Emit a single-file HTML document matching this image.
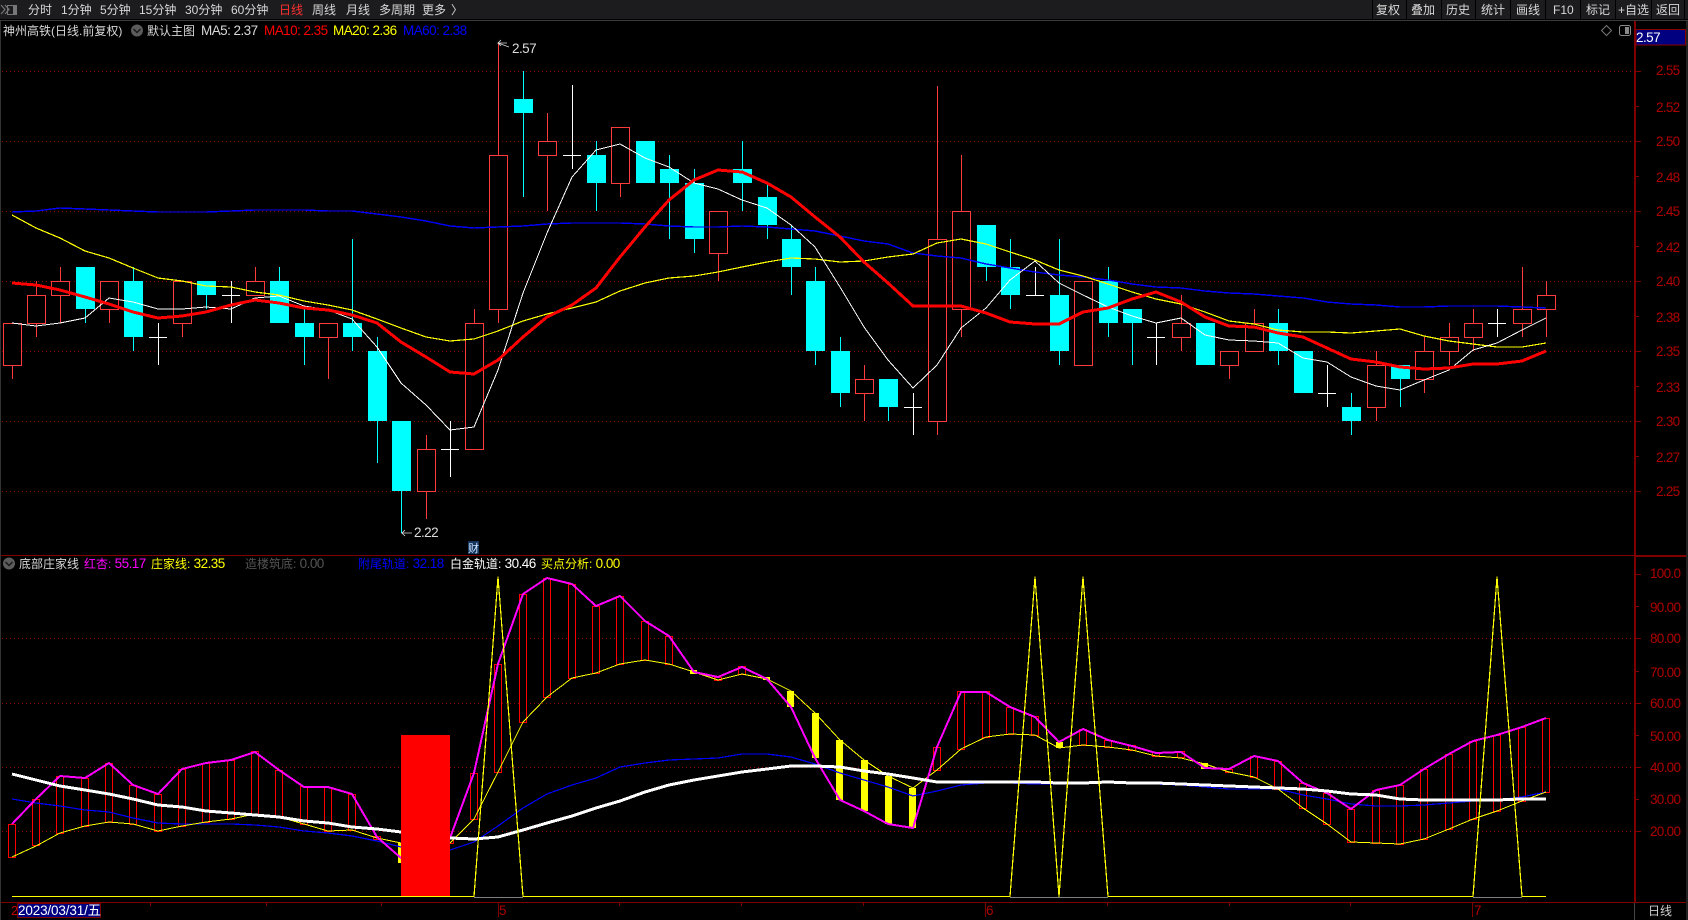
<!DOCTYPE html>
<html><head><meta charset="utf-8"><title>神州高铁</title>
<style>
html,body{margin:0;padding:0;background:#000;width:1688px;height:920px;overflow:hidden}
svg{display:block;position:absolute;left:0;top:0}
text{font-family:"Liberation Sans","Noto Sans CJK SC",sans-serif;font-size:12px;white-space:pre}
.w{fill:#d8d8d8}.a{fill:#b00000;font-size:13.5px;letter-spacing:-.7px}
.n{font-size:13.5px;letter-spacing:-.55px}
</style></head><body>
<svg width="1688" height="920" viewBox="0 0 1688 920" xmlns="http://www.w3.org/2000/svg">
<rect width="1688" height="920" fill="#000"/>
<rect width="1688" height="19" fill="#1c1c1e"/>
<rect y="20" width="1688" height="1" fill="#3a3a3a"/>
<g shape-rendering="crispEdges" fill="#000">
<rect x="1372" width="1" height="19"/><rect x="1406" width="1" height="19"/><rect x="1441" width="1" height="19"/><rect x="1475" width="1" height="19"/><rect x="1510" width="1" height="19"/><rect x="1545" width="1" height="19"/><rect x="1580" width="1" height="19"/><rect x="1615" width="1" height="19"/><rect x="1651" width="1" height="19"/><rect x="1684" width="1" height="19"/>
</g>
<!-- top-left icon -->
<path d="M1 5l4 4.5-4 4.5M5 5l4 4.5-4 4.5" fill="none" stroke="#777" stroke-width="1.2"/>
<rect x="7.5" y="5.5" width="9" height="9" fill="none" stroke="#777"/><rect x="13" y="6" width="3" height="8" fill="#777"/>
<text x="28" y="14" class="w">分时</text><text x="61" y="14" class="w">1分钟</text><text x="100" y="14" class="w">5分钟</text><text x="139" y="14" class="w">15分钟</text><text x="185" y="14" class="w">30分钟</text><text x="231" y="14" class="w">60分钟</text>
<text x="279" y="14" fill="#ff3030">日线</text>
<text x="312" y="14" class="w">周线</text><text x="346" y="14" class="w">月线</text><text x="379" y="14" class="w">多周期</text><text x="422" y="14" class="w">更多</text><text x="451" y="14" class="w">〉</text>
<text x="1376" y="14" class="w">复权</text><text x="1411" y="14" class="w">叠加</text><text x="1446" y="14" class="w">历史</text><text x="1481" y="14" class="w">统计</text><text x="1516" y="14" class="w">画线</text><text x="1553" y="14" class="w">F10</text><text x="1586" y="14" class="w">标记</text><text x="1618" y="14" class="w">+自选</text><text x="1656" y="14" class="w">返回</text>
<text x="3" y="35" class="w">神州高铁(日线.前复权)</text>
<circle cx="137" cy="30.5" r="6" fill="#5c5c5c"/><path d="M133.5 29l3.5 3.5 3.5-3.5" fill="none" stroke="#1a1a1a" stroke-width="1.5"/>
<text x="147" y="35" class="w">默认主图</text>
<text x="201" y="35" class="w n">MA5: 2.37</text>
<text x="264" y="35" fill="#f00" class="n">MA10: 2.35</text>
<text x="333" y="35" fill="#ff0" class="n">MA20: 2.36</text>
<text x="403" y="35" fill="#00f" class="n">MA60: 2.38</text>
<!-- tool icons -->
<path d="M1606.5 25.5l5 5-5 5-5-5z" fill="none" stroke="#777"/>
<rect x="1619.5" y="25.5" width="11" height="10" rx="2" fill="none" stroke="#888"/><rect x="1625" y="27" width="4" height="7" fill="#888"/>
<!-- grid -->
<g stroke="#8a0000" stroke-width="1" stroke-dasharray="1 3" shape-rendering="crispEdges">
<path d="M2 71.5H1635M2 141.5H1635M2 211.5H1635M2 281.5H1635M2 351.5H1635M2 421.5H1635M2 491.5H1635"/>
<path d="M2 638.5H1635M2 703.5H1635M2 767.5H1635M2 831.5H1635"/>
</g>
<!-- axes -->
<g shape-rendering="crispEdges" fill="#800000">
<rect x="1634" y="21" width="2" height="881"/>
<rect x="0" y="555" width="1688" height="1"/>
<rect x="1636" y="556" width="50" height="1"/>
<rect x="0" y="902" width="1686" height="1"/>
<rect x="1634" y="903" width="1" height="17" fill="#444"/>
<path d="M1636 71h5v1h-5zM1636 106h3v1h-3zM1636 141h5v1h-5zM1636 176h3v1h-3zM1636 211h5v1h-5zM1636 246h3v1h-3zM1636 281h5v1h-5zM1636 316h3v1h-3zM1636 351h5v1h-5zM1636 386h3v1h-3zM1636 421h5v1h-5zM1636 456h3v1h-3zM1636 491h5v1h-5zM1636 574h5v1h-5zM1636 606h3v1h-3zM1636 638h5v1h-5zM1636 671h3v1h-3zM1636 703h5v1h-5zM1636 735h3v1h-3zM1636 767h5v1h-5zM1636 799h3v1h-3zM1636 831h5v1h-5z"/>
<path d="M150 903h1v3h-1zM266 903h1v3h-1zM381 903h1v3h-1zM619 903h1v3h-1zM741 903h1v3h-1zM863 903h1v3h-1zM1107 903h1v3h-1zM1229 903h1v3h-1zM1350 903h1v3h-1zM498 903h1v14h-1zM985 903h1v14h-1zM1472 903h1v14h-1zM17 903h1v14h-1z"/>
</g>
<rect x="0" y="21" width="1" height="899" fill="#333"/>
<rect x="1686" y="21" width="2" height="899" fill="#222"/>
<!-- price labels -->
<text x="1656" y="75" class="a">2.55</text><text x="1656" y="112" class="a">2.52</text><text x="1656" y="146" class="a">2.50</text><text x="1656" y="182" class="a">2.48</text><text x="1656" y="216" class="a">2.45</text><text x="1656" y="252" class="a">2.42</text><text x="1656" y="286" class="a">2.40</text><text x="1656" y="322" class="a">2.38</text><text x="1656" y="356" class="a">2.35</text><text x="1656" y="392" class="a">2.33</text><text x="1656" y="426" class="a">2.30</text><text x="1656" y="462" class="a">2.27</text><text x="1656" y="496" class="a">2.25</text>
<text x="1650" y="578" class="a">100.0</text><text x="1650" y="612" class="a">90.00</text><text x="1650" y="643" class="a">80.00</text><text x="1650" y="677" class="a">70.00</text><text x="1650" y="708" class="a">60.00</text><text x="1650" y="741" class="a">50.00</text><text x="1650" y="772" class="a">40.00</text><text x="1650" y="804" class="a">30.00</text><text x="1650" y="836" class="a">20.00</text>
<rect x="1636" y="29.5" width="49.5" height="15.5" fill="#000080" stroke="#8a0000" shape-rendering="crispEdges"/>
<text x="1636" y="42" fill="#fff" class="n">2.57</text>
<!-- red candles -->
<path shape-rendering="crispEdges" fill="#000" stroke="#ff3b3b" d="
M3.5 323.5h18v42h-18zM12.5 366V379
M27.5 295.5h18v28h-18zM36.5 281V295M36.5 324V337
M51.5 281.5h18v14h-18zM60.5 267V281M60.5 296V323
M100.5 281.5h18v28h-18zM109.5 310V323
M173.5 281.5h18v42h-18zM182.5 324V337
M246.5 281.5h18v14h-18zM255.5 267V281
M319.5 323.5h18v14h-18zM328.5 338V379
M417.5 449.5h18v42h-18zM426.5 435V449M426.5 492V519
M465.5 323.5h18v126h-18zM474.5 309V323
M489.5 155.5h18v154h-18zM498.5 43V155M498.5 310V323
M538.5 141.5h18v14h-18zM547.5 113V141M547.5 156V211
M611.5 127.5h18v56h-18zM620.5 184V197
M709.5 211.5h18v42h-18zM718.5 254V281
M855.5 379.5h18v14h-18zM864.5 365V379M864.5 394V421
M928.5 239.5h18v182h-18zM937.5 86V239M937.5 422V435
M952.5 211.5h18v98h-18zM961.5 155V211M961.5 310V337
M1074.5 281.5h18v84h-18z
M1172.5 323.5h18v14h-18zM1181.5 295V323M1181.5 338V351
M1220.5 351.5h18v14h-18zM1229.5 366V379
M1245.5 323.5h18v28h-18zM1254.5 309V323
M1367.5 365.5h18v42h-18zM1376.5 351V365M1376.5 408V421
M1415.5 351.5h18v28h-18zM1424.5 337V351M1424.5 380V393
M1440.5 337.5h18v14h-18zM1449.5 323V337M1449.5 352V365
M1464.5 323.5h18v14h-18zM1473.5 309V323M1473.5 338V351
M1513.5 309.5h18v14h-18zM1522.5 267V309M1522.5 324V337
M1537.5 295.5h18v14h-18zM1546.5 281V295M1546.5 310V337"/>
<!-- cyan candles -->
<g shape-rendering="crispEdges">
<path stroke="#00ffff" fill="none" d="M85.5 309V323M133.5 267V351M206.5 295V309M279.5 267V281M304.5 309V365M352.5 239V351M377.5 337V463M401.5 491V533M523.5 71V197M596.5 141V211M669.5 155V239M694.5 169V253M742.5 141V211M767.5 183V239M791.5 225V295M815.5 267V365M840.5 337V407M888.5 407V421M986.5 267V281M1010.5 239V309M1059.5 239V365M1108.5 267V337M1132.5 323V365M1278.5 309V365M1351.5 393V435M1400.5 379V407"/>
<path fill="#00ffff" d="M76 267h19v42h-19zM124 281h19v56h-19zM197 281h19v14h-19zM270 281h19v42h-19zM295 323h19v14h-19zM343 323h19v14h-19zM368 351h19v70h-19zM392 421h19v70h-19zM514 99h19v14h-19zM587 155h19v28h-19zM636 141h19v42h-19zM660 169h19v14h-19zM685 183h19v56h-19zM733 169h19v14h-19zM758 197h19v28h-19zM782 239h19v28h-19zM806 281h19v70h-19zM831 351h19v42h-19zM879 379h19v28h-19zM977 225h19v42h-19zM1001 267h19v28h-19zM1050 295h19v56h-19zM1099 281h19v42h-19zM1123 309h19v14h-19zM1196 323h19v42h-19zM1269 323h19v28h-19zM1294 351h19v42h-19zM1342 407h19v14h-19zM1391 365h19v14h-19z"/>
<!-- doji -->
<path stroke="#fff" fill="none" d="M158.5 323V365M149 337.5h18M231.5 281V323M222 295.5h18M450.5 421V477M441 449.5h18M572.5 85V169M563 155.5h18M913.5 393V435M904 407.5h18M1035.5 267V295M1026 295.5h18M1156.5 323V365M1147 337.5h18M1327.5 365V407M1318 393.5h18M1497.5 309V337M1488 323.5h18"/>
</g>
<!-- MA lines -->
<g fill="none" stroke-linejoin="round" shape-rendering="crispEdges">
<polyline stroke="#0000ff" stroke-width="1.4" points="12,212 36,211 60,208 85,209 109,210 133,211 158,212 182,212 206,212 231,211 255,210 279,210 304,210 328,211 352,211 377,214 401,217 426,221 450,226 474,228 498,227 523,226 547,224 572,223 596,223 620,223 645,224 669,226 694,227 718,227 742,226 767,227 791,229 815,231 840,236 864,241 888,244 913,253 937,256 961,258 986,264 1010,268 1035,272 1059,275 1083,277 1108,280 1132,284 1156,287 1181,288 1205,291 1229,293 1254,294 1278,296 1303,298 1327,302 1351,304 1376,305 1400,307 1424,307 1449,306 1473,306 1497,306 1522,307 1546,308"/>
<polyline stroke="#ffff00" stroke-width="1.2" points="12,215 36,228 60,238 85,251 109,258 133,268 158,278 182,281 206,286 231,287 255,292 279,295 304,301 328,305 352,310 377,319 401,328 426,337 450,341 474,339 498,331 523,321 547,314 572,308 596,302 620,291 645,283 669,278 694,276 718,272 742,267 767,262 791,258 815,259 840,262 864,261 888,257 913,254 937,243 961,239 986,244 1010,252 1035,260 1059,270 1083,276 1108,284 1132,292 1156,299 1181,304 1205,312 1229,321 1254,324 1278,330 1303,332 1327,332 1351,333 1376,331 1400,329 1424,336 1449,341 1473,344 1497,347 1522,347 1546,343"/>
<polyline stroke="#ffffff" stroke-width="1" points="12,323 36,326 60,323 85,318 109,298 133,302 158,309 182,309 206,307 231,309 255,298 279,296 304,306 328,310 352,319 377,347 401,383 426,405 450,430 474,427 498,370 523,293 547,233 572,177 596,150 620,144 645,158 669,167 694,183 718,189 742,200 767,208 791,225 815,247 840,287 864,327 888,360 913,388 937,365 961,328 986,308 1010,280 1035,261 1059,283 1083,295 1108,307 1132,316 1156,323 1181,318 1205,335 1229,340 1254,341 1278,343 1303,358 1327,362 1351,377 1376,386 1400,390 1424,380 1449,370 1473,350 1497,343 1522,330 1546,318"/>
<polyline stroke="#ff0000" stroke-width="3" points="12,283 36,285 60,290 85,297 109,304 133,312 158,318 182,316 206,312 231,305 255,300 279,303 304,308 328,310 352,315 377,323 401,342 426,357 450,372 474,374 498,360 523,337 547,317 572,305 596,288 620,257 645,227 669,200 694,180 718,170 742,172 767,183 791,197 815,217 840,237 864,262 888,283 913,306 937,306 961,306 986,313 1010,322 1035,324 1059,324 1083,312 1108,308 1132,299 1156,292 1181,302 1205,317 1229,326 1254,327 1278,333 1303,337 1327,348 1351,359 1376,362 1400,367 1424,369 1449,368 1473,364 1497,364 1522,361 1546,351"/>
</g>
<!-- top marks -->
<path d="M507 43l-9 0 3-3M498 43l3 3M498 43l11 4" fill="none" stroke="#ddd" stroke-width=".8"/>
<text x="512" y="53" fill="#ddd" class="n">2.57</text>
<path d="M412 533h-10l3-3M402 533l3 3" fill="none" stroke="#ddd" stroke-width=".8"/>
<text x="414" y="537" fill="#ddd" class="n">2.22</text>
<rect x="468" y="541" width="11" height="13" fill="#12345c"/>
<text x="468" y="552" fill="#cfe4ff" style="font-size:11px">财</text>
<!-- indicator legend -->
<circle cx="9" cy="563.5" r="6" fill="#5c5c5c"/><path d="M5.5 562l3.5 3.5 3.5-3.5" fill="none" stroke="#1a1a1a" stroke-width="1.5"/>
<text x="19" y="568" class="w">底部庄家线</text>
<text x="84" y="568" fill="#ff00ff">红杏: <tspan class="n">55.17</tspan></text>
<text x="151" y="568" fill="#ffff00">庄家线: <tspan class="n">32.35</tspan></text>
<text x="245" y="568" fill="#555">造楼筑底: <tspan class="n">0.00</tspan></text>
<text x="358" y="568" fill="#0000ff">附尾轨道: <tspan class="n">32.18</tspan></text>
<text x="450" y="568" fill="#fff">白金轨道: <tspan class="n">30.46</tspan></text>
<text x="541" y="568" fill="#ffff00">买点分析: <tspan class="n">0.00</tspan></text>
<!-- lower panel -->
<g shape-rendering="crispEdges">
<path fill="#000" stroke="#ff0000" d="M8.5 824.5h7v33h-7zM32.5 799.5h7v46h-7zM56.5 776.5h7v57h-7zM81.5 778.5h7v48h-7zM105.5 763.5h7v59h-7zM129.5 785.5h7v39h-7zM154.5 794.5h7v37h-7zM178.5 769.5h7v57h-7zM202.5 763.5h7v59h-7zM227.5 760.5h7v59h-7zM251.5 751.5h7v63h-7zM275.5 770.5h7v47h-7zM300.5 786.5h7v38h-7zM324.5 787.5h7v44h-7zM348.5 794.5h7v36h-7zM373.5 836.5h7v3h-7zM446.5 837.5h7v6h-7zM470.5 773.5h7v46h-7zM494.5 664.5h7v108h-7zM519.5 594.5h7v128h-7zM543.5 578.5h7v119h-7zM568.5 584.5h7v94h-7zM592.5 606.5h7v67h-7zM616.5 596.5h7v68h-7zM641.5 621.5h7v39h-7zM665.5 636.5h7v28h-7zM714.5 677.5h7v3h-7zM738.5 666.5h7v8h-7z"/>
<path fill="#000" stroke="#ff0000" d="M933.5 747.5h7v23h-7zM957.5 691.5h7v58h-7zM982.5 691.5h7v46h-7zM1006.5 707.5h7v27h-7zM1031.5 716.5h7v19h-7zM1079.5 729.5h7v16h-7zM1104.5 740.5h7v7h-7zM1128.5 745.5h7v5h-7zM1152.5 752.5h7v4h-7zM1177.5 751.5h7v6h-7zM1225.5 769.5h7v3h-7zM1250.5 756.5h7v21h-7zM1274.5 761.5h7v28h-7zM1299.5 783.5h7v25h-7zM1323.5 793.5h7v31h-7zM1347.5 809.5h7v33h-7zM1372.5 790.5h7v53h-7zM1396.5 785.5h7v59h-7zM1420.5 769.5h7v70h-7zM1445.5 754.5h7v75h-7zM1469.5 741.5h7v78h-7zM1493.5 735.5h7v76h-7zM1518.5 727.5h7v74h-7zM1542.5 718.5h7v74h-7z"/>
<path fill="#ffff00" d="M398 843h3v20h-3zM690 670h7v4h-7zM763 677h7v3h-7zM787 691h7v16h-7zM812 713h7v45h-7zM836 740h7v60h-7zM861 760h7v51h-7zM885 776h7v48h-7zM909 788h7v40h-7zM1056 742h7v6h-7zM1201 763h7v6h-7z"/>
</g>
<g fill="none" stroke-linejoin="round" shape-rendering="crispEdges">
<polyline stroke="#0000ff" stroke-width="1.2" points="12,799 36,803 60,806 85,810 109,812 133,818 158,823 182,824 206,824 231,824 255,825 279,827 304,831 328,833 352,836 377,841 401,847 426,849 450,850 474,842 498,826 523,808 547,794 572,785 596,778 620,767 645,763 669,760 694,759 718,758 742,754 767,754 791,757 815,764 840,773 864,780 888,787 913,796 937,791 961,785 986,783 1010,783 1035,784 1059,784 1083,782 1108,782 1132,782 1156,784 1181,785 1205,787 1229,789 1254,789 1278,789 1303,795 1327,799 1351,804 1376,806 1400,806 1424,805 1449,803 1473,801 1497,800 1522,797 1546,792"/>
<polyline stroke="#ffff00" stroke-width="1" points="12,857 36,846 60,833 85,826 109,822 133,824 158,831 182,826 206,822 231,819 255,814 279,817 304,824 328,831 352,830 377,838 401,843 426,846 450,843 474,819 498,772 523,722 547,697 572,678 596,673 620,664 645,660 669,664 694,672 718,680 742,674 767,679 791,691 815,713 840,740 864,760 888,776 913,788 937,770 961,749 986,737 1010,734 1035,735 1059,748 1083,745 1108,747 1132,750 1156,756 1181,758 1205,764 1229,772 1254,777 1278,789 1303,808 1327,824 1351,842 1376,843 1400,844 1424,839 1449,829 1473,819 1497,811 1522,801 1546,792"/>
<polyline stroke="#ff00ff" stroke-width="2" points="12,824 36,799 60,776 85,778 109,763 133,785 158,794 182,769 206,763 231,760 255,752 279,770 304,787 328,787 352,794 377,837 401,858 426,850 450,838 474,773 498,664 523,594 547,578 572,584 596,606 620,596 645,621 669,636 694,672 718,677 742,667 767,679 791,707 815,758 840,800 864,811 888,824 913,828 937,747 961,692 986,692 1010,707 1035,717 1059,742 1083,729 1108,740 1132,746 1156,753 1181,752 1205,768 1229,769 1254,756 1278,761 1303,783 1327,793 1351,809 1376,790 1400,785 1424,769 1449,754 1473,741 1497,735 1522,727 1546,718"/>
<polyline stroke="#ffffff" stroke-width="3" points="12,774 36,780 60,786 85,790 109,794 133,799 158,805 182,807 206,811 231,813 255,815 279,817 304,821 328,823 352,827 377,829 401,832 426,835 450,838 474,839 498,837 523,830 547,823 572,816 596,808 620,801 645,792 669,785 694,780 718,776 742,772 767,769 791,766 815,766 840,767 864,771 888,774 913,778 937,782 961,782 986,782 1010,782 1035,782 1059,783 1083,783 1108,782 1132,783 1156,783 1181,784 1205,785 1229,786 1254,787 1278,788 1303,789 1327,791 1351,794 1376,795 1400,799 1424,800 1449,800 1473,800 1497,800 1522,799 1546,799"/>
<path stroke="#808080" stroke-width="1" d="M474 897.5H523M1010 897.5H1108M1473 897.5H1522"/>
<path stroke="#ffff00" stroke-width="1.2" d="M12 896.5H474L498 577 523 896.5H1010L1035 577 1059 896.5 1083 577 1108 896.5H1473L1497 577 1522 896.5H1546"/>
</g>
<rect x="401" y="735" width="49" height="161" fill="#ff0000" shape-rendering="crispEdges"/>
<!-- date axis -->
<text x="11" y="915" fill="#c00000" style="font-size:13px">2</text>
<rect x="17.5" y="903.5" width="83" height="14" fill="#000080" stroke="#7a0000" shape-rendering="crispEdges"/>
<text x="18" y="915" fill="#fff" style="font-size:13.5px;letter-spacing:-.15px">2023/03/31/五</text>
<text x="499" y="915" class="a">5</text><text x="986" y="915" class="a">6</text><text x="1474" y="915" class="a">7</text>
<text x="1648" y="915" fill="#cfcfcf">日线</text>
</svg>
</body></html>
